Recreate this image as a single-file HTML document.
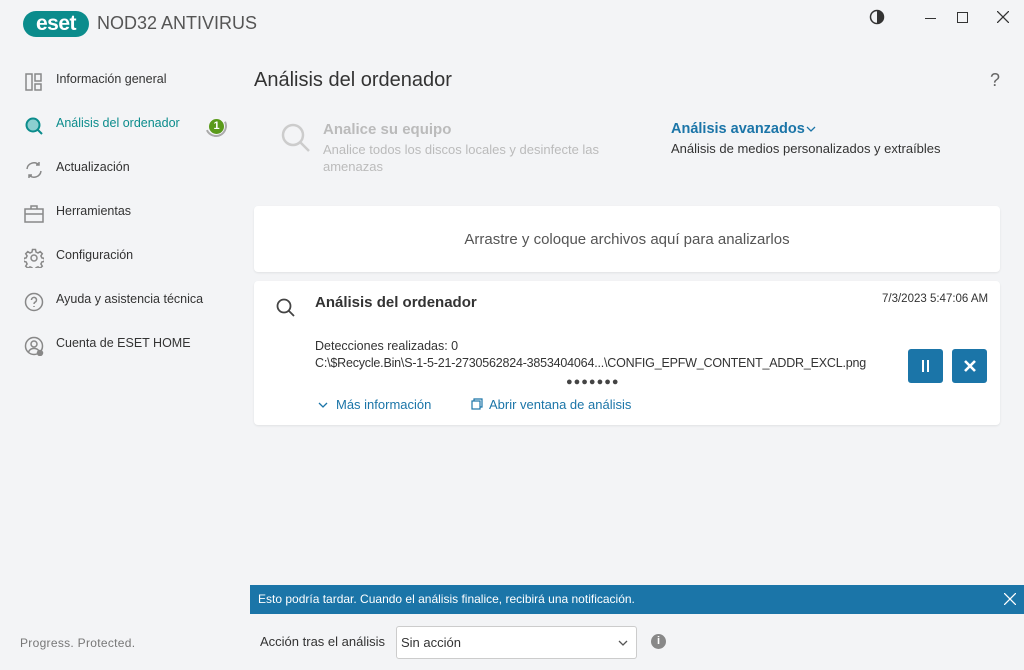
<!DOCTYPE html>
<html><head><meta charset="utf-8"><style>
*{margin:0;padding:0;box-sizing:border-box}
body{width:1024px;height:670px;background:#f3f4f6;font-family:"Liberation Sans",sans-serif;color:#333;position:relative;overflow:hidden}
.a{position:absolute;white-space:nowrap}
.nav{font-size:12.5px;color:#333}
.ic{position:absolute;left:24px;width:20px;height:20px}
.card{position:absolute;background:#fff;border-radius:4px;box-shadow:0 1px 2px rgba(0,0,0,.08)}
.btn{position:absolute;width:35px;height:34px;background:#1b75a8;border-radius:3px;color:#fff;text-align:center;line-height:34px;font-weight:bold}
</style></head><body>
<div class="a" style="left:23px;top:11px;width:66px;height:26px;background:#0b8c8c;border-radius:13px;color:#fff;font-weight:bold;font-size:21px;line-height:25px;text-align:center;letter-spacing:-0.5px">eset</div>
<div class="a" style="left:97px;top:13px;font-size:18px;color:#555">NOD32 ANTIVIRUS</div>
<svg class="a" style="left:869px;top:9px" width="16" height="16" viewBox="0 0 16 16"><circle cx="8" cy="8" r="6.5" fill="none" stroke="#333" stroke-width="1.5"/><path d="M8 1.5a6.5 6.5 0 0 1 0 13z" fill="#333"/></svg>
<div class="a" style="left:925px;top:18px;width:11px;height:1px;background:#333"></div>
<div class="a" style="left:957px;top:12px;width:11px;height:11px;border:1px solid #333"></div>
<svg class="a" style="left:997px;top:11px" width="12" height="12" viewBox="0 0 12 12" stroke="#333" stroke-width="1.3"><path d="M0 0L12 12M12 0L0 12"/></svg>

<svg class="ic" style="top:72px" viewBox="0 0 20 20" fill="none" stroke="#888" stroke-width="1.5"><rect x="2" y="2" width="6" height="16"/><rect x="11" y="2" width="6" height="7"/><rect x="11" y="12" width="6" height="6"/></svg>
<div class="a nav" style="left:56px;top:72px">Información general</div>
<svg class="ic" style="top:116px" viewBox="0 0 20 20"><circle cx="9" cy="9" r="6.5" fill="#8ccfd0" stroke="#0b8c8c" stroke-width="2"/><path d="M13.5 13.5L18 18" stroke="#0b8c8c" stroke-width="2"/></svg>
<div class="a nav" style="left:56px;top:116px;color:#0b8c8c">Análisis del ordenador</div>
<div class="a" style="left:205px;top:115px;width:22px;height:22px;border-radius:50%;border:2px solid #aaa;border-top-color:transparent;border-left-color:transparent;transform:rotate(20deg)"></div>
<div class="a" style="left:209px;top:119px;width:15px;height:15px;border-radius:50%;background:#5a9a1a;color:#fff;font-size:11px;font-weight:bold;text-align:center;line-height:15px">1</div>
<svg class="ic" style="top:160px" viewBox="0 0 20 20" fill="none" stroke="#888" stroke-width="1.5"><path d="M3 9a7 7 0 0 1 12-4M17 11a7 7 0 0 1-12 4M15 2v3h-3M5 18v-3h3"/></svg>
<div class="a nav" style="left:56px;top:160px">Actualización</div>
<svg class="ic" style="top:204px" viewBox="0 0 20 20" fill="none" stroke="#888" stroke-width="1.5"><rect x="1" y="5" width="18" height="13"/><path d="M7 5V2h6v3M1 10h18"/></svg>
<div class="a nav" style="left:56px;top:204px">Herramientas</div>
<svg class="ic" style="top:248px" viewBox="0 0 20 20" fill="none" stroke="#888" stroke-width="1.5"><circle cx="10" cy="10" r="3"/><path d="M8.5 1.5h3l.5 2.5 2 1 2.2-1.4 2.1 2.1-1.4 2.2 1 2 2.5.5v3l-2.5.5-1 2 1.4 2.2-2.1 2.1-2.2-1.4-2 1-.5 2.5h-3l-.5-2.5-2-1-2.2 1.4-2.1-2.1 1.4-2.2-1-2-2.5-.5v-3l2.5-.5 1-2-1.4-2.2 2.1-2.1 2.200 1.4 2-1z"/></svg>
<div class="a nav" style="left:56px;top:248px">Configuración</div>
<svg class="ic" style="top:292px" viewBox="0 0 20 20" fill="none" stroke="#888" stroke-width="1.5"><circle cx="10" cy="10" r="8.5"/><path d="M7.5 8a2.5 2.5 0 1 1 3.5 2.2c-.7.4-1 .8-1 1.8M10 14v1"/></svg>
<div class="a nav" style="left:56px;top:292px">Ayuda y asistencia técnica</div>
<svg class="ic" style="top:336px" viewBox="0 0 20 20" fill="none" stroke="#888" stroke-width="1.5"><circle cx="10" cy="10" r="8.5"/><circle cx="10" cy="8" r="3"/><path d="M4.5 16a6 6 0 0 1 11 0"/><circle cx="16" cy="17" r="2.5" fill="#888"/></svg>
<div class="a nav" style="left:56px;top:336px">Cuenta de ESET HOME</div>
<div class="a" style="left:20px;top:636px;font-size:12px;color:#777;letter-spacing:.3px">Progress. Protected.</div>

<div class="a" style="left:254px;top:69px;font-size:20px;color:#333">Análisis del ordenador</div>
<div class="a" style="left:990px;top:70px;font-size:18px;color:#666">?</div>
<svg class="a" style="left:280px;top:122px" width="32" height="32" viewBox="0 0 32 32" fill="none" stroke="#ccc" stroke-width="2.5"><circle cx="13" cy="13" r="10"/><path d="M20 20l9 9"/></svg>
<div class="a" style="left:323px;top:121px;font-size:15px;color:#bbb;font-weight:bold">Analice su equipo</div>
<div class="a" style="left:323px;top:141px;font-size:13px;color:#bbb;line-height:17px">Analice todos los discos locales y desinfecte las<br>amenazas</div>
<div class="a" style="left:671px;top:121px;font-size:14.5px;color:#1b75a8;font-weight:bold">Análisis avanzados</div>
<svg class="a" style="left:806px;top:126px" width="10" height="6" viewBox="0 0 10 6" fill="none" stroke="#1b75a8" stroke-width="1.3"><path d="M1 1l4 4 4-4"/></svg>
<div class="a" style="left:671px;top:141px;font-size:13px;color:#333">Análisis de medios personalizados y extraíbles</div>

<div class="card" style="left:254px;top:206px;width:746px;height:66px"><div style="text-align:center;line-height:68px;font-size:15px;color:#555">Arrastre y coloque archivos aquí para analizarlos</div></div>
<div class="card" style="left:254px;top:281px;width:746px;height:144px"></div>
<svg class="a" style="left:275px;top:297px" width="22" height="22" viewBox="0 0 22 22" fill="none" stroke="#444" stroke-width="1.8"><circle cx="9" cy="9" r="6.5"/><path d="M13.5 13.5L19 19"/></svg>
<div class="a" style="left:315px;top:294px;font-size:15px;font-weight:bold;color:#333">Análisis del ordenador</div>
<div class="a" style="left:882px;top:293px;font-size:11.5px;color:#333">7/3/2023 5:47:06 AM</div>
<div class="a" style="left:315px;top:339px;font-size:12.5px">Detecciones realizadas: 0</div>
<div class="a" style="left:315px;top:356px;font-size:12.5px;letter-spacing:-0.2px">C:\$Recycle.Bin\S-1-5-21-2730562824-3853404064...\CONFIG_EPFW_CONTENT_ADDR_EXCL.png</div>
<div class="a" style="left:566px;top:376px;font-size:11px;letter-spacing:1px;color:#444">●●●●●●●</div>
<svg class="a" style="left:318px;top:402px" width="10" height="6" viewBox="0 0 10 6" fill="none" stroke="#1b75a8" stroke-width="1.3"><path d="M1 1l4 4 4-4"/></svg>
<div class="a" style="left:336px;top:397px;font-size:13px;color:#1b75a8">Más información</div>
<svg class="a" style="left:471px;top:398px" width="12" height="12" viewBox="0 0 12 12" fill="none" stroke="#1b75a8" stroke-width="1.2"><rect x="1" y="3" width="8" height="8"/><path d="M3 3V1h8v8H9"/></svg>
<div class="a" style="left:489px;top:397px;font-size:13px;color:#1b75a8">Abrir ventana de análisis</div>
<div class="btn" style="left:908px;top:349px"><svg width="10" height="12" viewBox="0 0 10 12" style="margin-top:11px" fill="#fff"><rect x="1" y="0" width="2" height="12"/><rect x="6" y="0" width="2" height="12"/></svg></div>
<div class="btn" style="left:952px;top:349px"><svg width="12" height="12" viewBox="0 0 12 12" style="margin-top:11px" stroke="#fff" stroke-width="2.6"><path d="M1 1L11 11M11 1L1 11"/></svg></div>

<div class="a" style="left:250px;top:585px;width:774px;height:29px;background:#1b75a8;color:#fff;font-size:12px;line-height:29px;padding-left:8px">Esto podría tardar. Cuando el análisis finalice, recibirá una notificación.<svg style="position:absolute;right:8px;top:8px" width="12" height="12" viewBox="0 0 12 12" stroke="#fff" stroke-width="1.3"><path d="M0 0L12 12M12 0L0 12"/></svg></div>
<div class="a" style="left:260px;top:634px;font-size:13px">Acción tras el análisis</div>
<div class="a" style="left:396px;top:626px;width:241px;height:33px;background:#fff;border:1px solid #ccc;border-radius:3px;font-size:13px;line-height:31px;padding-left:4px">Sin acción<svg style="position:absolute;right:8px;top:13px" width="10" height="6" viewBox="0 0 10 6" fill="none" stroke="#555" stroke-width="1.3"><path d="M1 1l4 4 4-4"/></svg></div>
<div class="a" style="left:651px;top:634px;width:15px;height:15px;border-radius:50%;background:#888;color:#fff;font-size:11px;font-weight:bold;text-align:center;line-height:15px">i</div>
</body></html>
